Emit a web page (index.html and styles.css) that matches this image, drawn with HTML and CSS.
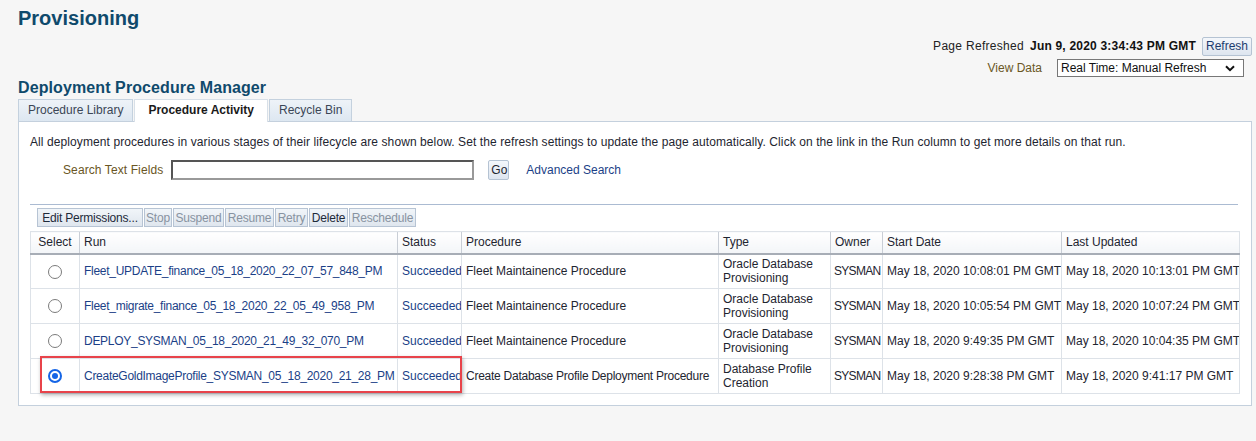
FILE: index.html
```html
<!DOCTYPE html>
<html>
<head>
<meta charset="utf-8">
<link rel="stylesheet" href="styles.css">
</head>
<body>
<div class="page">
  <h1 class="title">Provisioning</h1>
  <div class="refresh-area">
    <div class="refresh-row">
      <span class="lbl-dark">Page Refreshed</span>
      <span class="refresh-time">Jun 9, 2020 3:34:43 PM GMT</span>
      <button class="btn">Refresh</button>
    </div>
    <div class="view-row">
      <span class="lbl-brown">View Data</span>
      <div class="select"><span>Real Time: Manual Refresh</span>
        <svg width="10" height="7" viewBox="0 0 10 7"><path d="M1 1.2 L5 5.2 L9 1.2" fill="none" stroke="#111" stroke-width="2"/></svg>
      </div>
    </div>
  </div>
  <h2 class="subtitle">Deployment Procedure Manager</h2>
  <div class="tabs">
    <div class="tab">Procedure Library</div>
    <div class="tab active">Procedure Activity</div>
    <div class="tab">Recycle Bin</div>
  </div>
  <div class="panel">
    <p class="desc">All deployment procedures in various stages of their lifecycle are shown below. Set the refresh settings to update the page automatically. Click on the link in the Run column to get more details on that run.</p>
    <div class="search-row">
      <span class="lbl-brown search-label">Search Text Fields</span>
      <div class="input"></div>
      <button class="btn go">Go</button>
      <a class="link adv">Advanced Search</a>
    </div>
    <div class="sep"></div>
    <div class="toolbar">
      <button class="tbtn w-edit">Edit Permissions...</button>
      <button class="tbtn dis w-stop">Stop</button>
      <button class="tbtn dis w-susp">Suspend</button>
      <button class="tbtn dis w-res">Resume</button>
      <button class="tbtn dis w-retry">Retry</button>
      <button class="tbtn w-del">Delete</button>
      <button class="tbtn dis w-resch">Reschedule</button>
    </div>
    <div class="table-wrap">
      <table class="grid">
        <colgroup>
          <col class="c1"><col class="c2"><col class="c3"><col class="c4"><col class="c5"><col class="c6"><col class="c7"><col class="c8">
        </colgroup>
        <thead>
          <tr><th>Select</th><th>Run</th><th>Status</th><th>Procedure</th><th>Type</th><th>Owner</th><th>Start Date</th><th>Last Updated</th></tr>
        </thead>
        <tbody>
          <tr>
            <td class="sel"><span class="radio"></span></td>
            <td><a class="link run">Fleet_UPDATE_finance_05_18_2020_22_07_57_848_PM</a></td>
            <td><a class="link">Succeeded</a></td>
            <td class="proc">Fleet Maintainence Procedure</td>
            <td>Oracle Database Provisioning</td>
            <td class="owner">SYSMAN</td>
            <td>May 18, 2020 10:08:01 PM GMT</td>
            <td>May 18, 2020 10:13:01 PM GMT</td>
          </tr>
          <tr>
            <td class="sel"><span class="radio"></span></td>
            <td><a class="link run">Fleet_migrate_finance_05_18_2020_22_05_49_958_PM</a></td>
            <td><a class="link">Succeeded</a></td>
            <td class="proc">Fleet Maintainence Procedure</td>
            <td>Oracle Database Provisioning</td>
            <td class="owner">SYSMAN</td>
            <td>May 18, 2020 10:05:54 PM GMT</td>
            <td>May 18, 2020 10:07:24 PM GMT</td>
          </tr>
          <tr>
            <td class="sel"><span class="radio"></span></td>
            <td><a class="link run">DEPLOY_SYSMAN_05_18_2020_21_49_32_070_PM</a></td>
            <td><a class="link">Succeeded</a></td>
            <td class="proc">Fleet Maintainence Procedure</td>
            <td>Oracle Database Provisioning</td>
            <td class="owner">SYSMAN</td>
            <td>May 18, 2020 9:49:35 PM GMT</td>
            <td>May 18, 2020 10:04:35 PM GMT</td>
          </tr>
          <tr>
            <td class="sel"><span class="radio checked"></span></td>
            <td><a class="link run">CreateGoldImageProfile_SYSMAN_05_18_2020_21_28_PM</a></td>
            <td><a class="link">Succeeded</a></td>
            <td class="proc tight">Create Database Profile Deployment Procedure</td>
            <td>Database Profile Creation</td>
            <td class="owner">SYSMAN</td>
            <td>May 18, 2020 9:28:38 PM GMT</td>
            <td>May 18, 2020 9:41:17 PM GMT</td>
          </tr>
        </tbody>
      </table>
      <div class="highlight"></div>
    </div>
  </div>
</div>
</body>
</html>
```

FILE: styles.css
```css
* { box-sizing: border-box; }
html, body { margin: 0; padding: 0; }
body {
  background: #f6f6f6;
  font-family: "Liberation Sans", Arial, sans-serif;
  font-size: 12px;
  color: #1e2530;
  width: 1256px;
  height: 441px;
  overflow: hidden;
}
.page { padding: 0 4px 0 18px; }
.title {
  margin: 0;
  padding-top: 6px;
  font-size: 20px;
  line-height: 24px;
  font-weight: bold;
  color: #0f4a6c;
}
.refresh-area { display: flex; flex-direction: column; align-items: flex-end; margin-top: 7px; }
.refresh-row { display: flex; align-items: center; height: 18px; gap: 6px; }
.refresh-row .lbl-dark { letter-spacing: 0.3px; }
.refresh-time { font-weight: bold; color: #111; letter-spacing: 0.2px; }
.lbl-dark { color: #222; }
.lbl-brown { color: #6a5624; }
.btn {
  font-family: inherit;
  font-size: 12px;
  height: 19px;
  padding: 0 3px;
  border: 1px solid #b5c3d3;
  border-radius: 2px;
  background: linear-gradient(#f4f7fb, #dde5ef);
  color: #1c3c6e;
  line-height: 16px;
}
.view-row { display: flex; align-items: center; margin-top: 4px; margin-right: 8px; gap: 15px; }
.select {
  width: 187px;
  height: 18px;
  border: 1px solid #777;
  background: #fff;
  display: flex;
  align-items: center;
  justify-content: space-between;
  padding: 0 8px 0 3px;
  color: #111;
}
.subtitle {
  margin: 2px 0 0 0;
  font-size: 16px;
  line-height: 18px;
  font-weight: bold;
  color: #0f4a6c;
  letter-spacing: 0.1px;
}
.tabs { display: flex; margin-top: 2px; height: 22px; }
.tab {
  height: 22px;
  padding: 0 9px;
  line-height: 21px;
  border: 1px solid #c4d1de;
  border-bottom: none;
  background: linear-gradient(#eef3f8, #dde7f1);
  color: #3b4656;
  margin-right: 1px;
}
.tab.active {
  background: #fff;
  font-weight: bold;
  color: #1a1a1a;
  padding: 0 13px;
  height: 23px;
  position: relative;
  z-index: 1;
  border-color: #d8e0e8;
}
.panel {
  background: #fff;
  border: 1px solid #c4d0dd;
  padding: 12px 12px 11px 11px;
}
.desc { margin: 0; line-height: 16px; color: #1e2530; letter-spacing: 0.09px; }
.search-row { display: flex; align-items: center; margin-top: 10px; height: 20px; padding-left: 33px; }
.search-label { margin-right: 8px; letter-spacing: 0.1px; }
.input { width: 303px; height: 20px; border: 2px solid #555; border-right-color: #999; border-bottom-color: #999; background: #fff; }
.go { margin-left: 14px; padding: 0 2px; height: 20px; width: 21px; color: #1e2530; }
.link { color: #1b3f87; text-decoration: none; }
.adv { margin-left: 17px; }
.sep { margin-top: 24px; border-top: 1px solid #abbbd2; margin-right: 1px; }
.toolbar { display: flex; margin-top: 3px; margin-left: 7px; gap: 1px; }
.tbtn {
  font-family: inherit;
  font-size: 12px;
  height: 19px;
  padding: 0;
  border: 1px solid #b7c4d4;
  background: linear-gradient(#f1f5f9, #dfe6ee);
  color: #1e2a3a;
  line-height: 16px;
  text-align: center;
  white-space: nowrap;
  letter-spacing: -0.2px;
}
.tbtn.dis { color: #8893a1; }
.w-edit { width: 106px; }
.w-stop { width: 28px; }
.w-susp { width: 51px; }
.w-res { width: 49px; }
.w-retry { width: 33px; }
.w-del { width: 39px; }
.w-resch { width: 67px; }
.table-wrap { position: relative; margin-top: 4px; }
.grid { border-collapse: collapse; table-layout: fixed; width: 1209px; }
.c1 { width: 49px; } .c2 { width: 318px; } .c3 { width: 64px; } .c4 { width: 257px; }
.c5 { width: 112px; } .c6 { width: 52px; } .c7 { width: 179px; } .c8 { width: 178px; }
.grid th {
  height: 22px;
  text-align: left;
  font-weight: normal;
  padding: 0 4px;
  color: #1e2530;
  background: linear-gradient(#fff, #f3f5f8);
  border-left: 1px solid #c9ced6;
  border-top: 1px solid #dde2e8;
  border-bottom: 2px solid #a7adb6;
}
.grid th:first-child { border-left: 1px solid #dde2e8; text-align: center; }
.grid th:last-child { border-right: 1px solid #dde2e8; }
.grid td {
  height: 35px;
  padding: 0 4px;
  line-height: 14px;
  border: 1px solid #dde2e8;
  white-space: nowrap;
  overflow: hidden;
}
.grid td:nth-child(5) { white-space: normal; }
.grid td.sel { text-align: center; padding: 0; }
.grid td.owner { padding: 0 2px 0 3px; letter-spacing: -0.7px; }
.grid td.proc.tight { padding: 0 2px 0 4px; letter-spacing: -0.25px; }
.run { letter-spacing: -0.28px; }
.radio {
  display: inline-block;
  width: 14px;
  height: 14px;
  border: 1px solid #7b7b7b;
  border-radius: 50%;
  background: #fff;
  vertical-align: middle;
  position: relative;
}
.radio.checked { border: 2px solid #1565e6; }
.radio.checked::after {
  content: "";
  position: absolute;
  left: 2px; top: 2px;
  width: 6px; height: 6px;
  border-radius: 50%;
  background: #1565e6;
}
.highlight {
  position: absolute;
  left: 10px;
  top: 125px;
  width: 422px;
  height: 37px;
  border: 2px solid #e8434a;
  box-shadow: 1px 2px 4px rgba(0,0,0,0.3);
  pointer-events: none;
}
```
